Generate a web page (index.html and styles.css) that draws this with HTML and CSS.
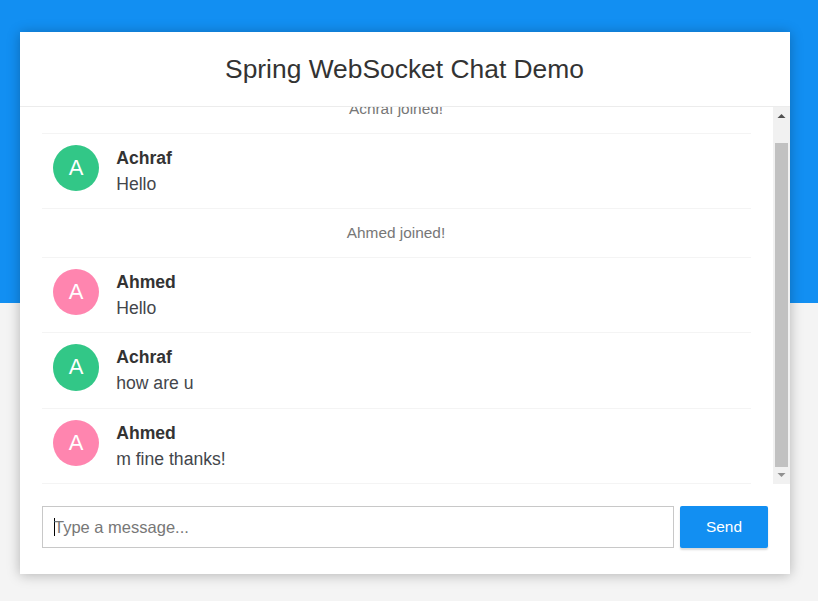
FILE: index.html
```html
<!DOCTYPE html>
<html lang="en">
<head>
<meta charset="utf-8">
<title>Spring WebSocket Chat Demo</title>
<link rel="stylesheet" href="styles.css">
</head>
<body>
<main class="chat">
  <header class="chat-header"><h2>Spring WebSocket Chat Demo</h2></header>
  <section class="chat-body">
    <ul class="messages">
      <li class="event">Achraf joined!</li>
      <li class="message"><i class="avatar green">A</i><div><strong>Achraf</strong><p>Hello</p></div></li>
      <li class="event">Ahmed joined!</li>
      <li class="message"><i class="avatar pink">A</i><div><strong>Ahmed</strong><p>Hello</p></div></li>
      <li class="message"><i class="avatar green">A</i><div><strong>Achraf</strong><p>how are u</p></div></li>
      <li class="message"><i class="avatar pink">A</i><div><strong>Ahmed</strong><p>m fine thanks!</p></div></li>
    </ul>
    <div class="scrollbar">
      <svg width="17" height="17" viewBox="0 0 17 17"><path d="M4.5 11 8.5 7l4 4z" fill="#505050"/></svg>
      <div class="thumb"></div>
      <svg width="17" height="17" viewBox="0 0 17 17"><path d="M4.5 6 8.5 10l4-4z" fill="#909090"/></svg>
    </div>
  </section>
  <form class="composer">
    <div class="field"><span class="caret"></span><span class="placeholder">Type a message...</span></div>
    <button type="button" class="send">Send</button>
  </form>
</main>
</body>
</html>
```
FILE: styles.css
```css
* { box-sizing: border-box; }
body {
  margin: 0;
  height: 601px;
  padding: 32px 28px 0 20px;
  overflow: hidden;
  background: linear-gradient(#128ff2 303px, #f4f4f4 303px);
  font-family: "Liberation Sans", Arial, sans-serif;
  font-size: 17.6px;
  color: #333;
}
.chat {
  height: 542px;
  background: #fff;
  box-shadow: 0 1px 12px rgba(0, 0, 0, 0.27);
  display: flex;
  flex-direction: column;
}
.chat-header {
  height: 75px;
  padding-right: 1px;
  border-bottom: 1px solid #ececec;
  text-align: center;
}
.chat-header h2 {
  margin: 0;
  font-size: 26.4px;
  font-weight: 500;
  line-height: 74px;
}
.chat-body {
  height: 377px;
  display: flex;
  justify-content: space-between;
  overflow: hidden;
}
.messages {
  width: 709px;
  margin: 0 0 0 22px;
  padding: 0;
  list-style: none;
  display: flex;
  flex-direction: column;
  justify-content: flex-end;
}
.messages li { border-bottom: 1px solid #f4f4f4; flex: none; }
.event {
  height: 49px;
  padding-right: 1px;
  color: #777;
  font-size: 15.4px;
  line-height: 48px;
  text-align: center;
}
.message {
  height: 75.3px;
  padding: 11px 11px 0;
  display: flex;
  gap: 17px;
  line-height: 26px;
}
.message strong { display: block; font-weight: 700; }
.message p { margin: 0; color: #43464b; }
.avatar {
  width: 46.2px;
  height: 46.2px;
  border-radius: 50%;
  color: #fff;
  font-size: 22px;
  font-style: normal;
  line-height: 46px;
  text-align: center;
}
.green { background: #32c787; }
.pink { background: #ff85af; }
.scrollbar {
  width: 17px;
  background: #f1f1f1;
  display: flex;
  flex-direction: column;
}
.scrollbar svg { flex: none; }
.thumb {
  flex: 1;
  margin: 19px 2px 0;
  background: #c1c1c1;
}
.composer {
  padding: 22px 22px 0;
  display: flex;
  gap: 6px;
}
.field {
  width: 632px;
  height: 42px;
  border: 1px solid #c8c8c8;
  padding-left: 11px;
  display: flex;
  align-items: center;
  color: #777;
  font-size: 16.5px;
}
.caret {
  width: 1px;
  height: 18px;
  background: #000;
}
.placeholder { margin-left: -1px; }
.send {
  width: 88px;
  height: 42px;
  padding: 0;
  border: 0;
  border-radius: 2px;
  background: #128ff2;
  box-shadow: 0 2px 2px rgba(0, 0, 0, 0.15);
  color: #fff;
  font: 15.4px "Liberation Sans", Arial, sans-serif;
}
```
